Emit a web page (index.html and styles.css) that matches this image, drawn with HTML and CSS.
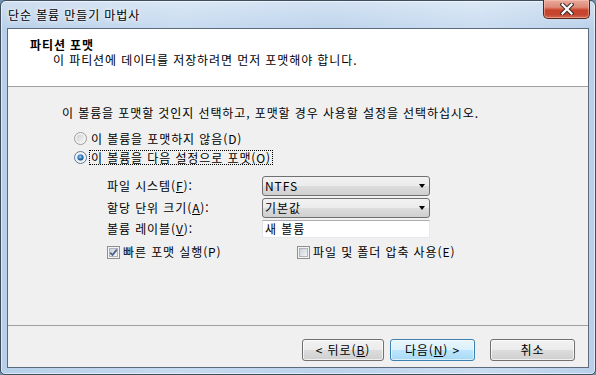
FILE: index.html
```html
<!DOCTYPE html>
<html lang="ko">
<head>
<meta charset="utf-8">
<title>단순 볼륨 만들기 마법사</title>
<link rel="stylesheet" href="styles.css">
</head>
<body>
<div class="window">
  <div class="titlebar">
    <span class="title">단순 볼륨 만들기 마법사</span>
    <div class="close">
      <svg width="14" height="12" viewBox="0 0 14 12">
        <path d="M2.5 1.5 L11.5 10.5 M11.5 1.5 L2.5 10.5" stroke="#3a2a28" stroke-width="4.2" stroke-linecap="square" fill="none"/>
        <path d="M2.5 1.5 L11.5 10.5 M11.5 1.5 L2.5 10.5" stroke="#ffffff" stroke-width="2.2" stroke-linecap="square" fill="none"/>
      </svg>
    </div>
  </div>
  <div class="client">
    <div class="header">
      <div class="h-title">파티션 포맷</div>
      <div class="h-sub">이 파티션에 데이터를 저장하려면 먼저 포맷해야 합니다.</div>
    </div>
    <div class="content">
      <div class="intro">이 볼륨을 포맷할 것인지 선택하고, 포맷할 경우 사용할 설정을 선택하십시오.</div>
      <div class="radios">
        <div class="radio">
          <svg class="rbox" width="13" height="13" viewBox="0 0 13 13">
            <defs>
              <linearGradient id="rg1" x1="0" y1="0" x2="1" y2="1">
                <stop offset="0" stop-color="#d0d0d0"/>
                <stop offset="1" stop-color="#f7f7f7"/>
              </linearGradient>
            </defs>
            <circle cx="6.5" cy="6.5" r="6" fill="#f4f4f4" stroke="#9a9a9a"/>
            <circle cx="6.5" cy="6.5" r="4" fill="url(#rg1)"/>
          </svg>
          <span class="rtext">이 볼륨을 포맷하지 않음(D)</span>
        </div>
        <div class="radio">
          <svg class="rbox" width="13" height="13" viewBox="0 0 13 13">
            <defs>
              <radialGradient id="rg2" cx="0.45" cy="0.4" r="0.6">
                <stop offset="0" stop-color="#9fd6f7"/>
                <stop offset="0.55" stop-color="#2f7fc2"/>
                <stop offset="1" stop-color="#17406f"/>
              </radialGradient>
            </defs>
            <circle cx="6.5" cy="6.5" r="6" fill="#f4f4f4" stroke="#5e7a99"/>
            <circle cx="6.5" cy="6.5" r="4" fill="#dfe6ee"/>
            <circle cx="6.5" cy="6.5" r="3" fill="url(#rg2)"/>
          </svg>
          <span class="rtext focus">이 볼륨을 다음 설정으로 포맷(O)</span>
        </div>
      </div>
      <div class="form">
        <span class="label">파일 시스템(<u>F</u>):</span>
        <div class="combo"><span>NTFS</span><i class="arrow"></i></div>
        <span class="label">할당 단위 크기(<u>A</u>):</span>
        <div class="combo"><span>기본값</span><i class="arrow"></i></div>
        <span class="label">볼륨 레이블(<u>V</u>):</span>
        <div class="textbox">새 볼륨</div>
      </div>
      <div class="checks">
        <div class="check first">
          <svg width="13" height="13" viewBox="0 0 13 13">
            <defs>
              <linearGradient id="cg1" x1="0" y1="0" x2="1" y2="1">
                <stop offset="0" stop-color="#cbcfd5"/>
                <stop offset="1" stop-color="#f4f6f8"/>
              </linearGradient>
            </defs>
            <rect x="0.5" y="0.5" width="12" height="12" fill="#f4f4f4" stroke="#8e8f8f"/>
            <rect x="2.5" y="2.5" width="8" height="8" fill="url(#cg1)" stroke="#aeb4bb"/>
            <path d="M3.3 6.6 L5.5 9 L9.8 3.6" stroke="#4a5f8a" stroke-width="1.7" fill="none"/>
          </svg>
          <span>빠른 포맷 실행(P)</span>
        </div>
        <div class="check">
          <svg width="13" height="13" viewBox="0 0 13 13">
            <defs>
              <linearGradient id="cg2" x1="0" y1="0" x2="1" y2="1">
                <stop offset="0" stop-color="#cbcfd5"/>
                <stop offset="1" stop-color="#f4f6f8"/>
              </linearGradient>
            </defs>
            <rect x="0.5" y="0.5" width="12" height="12" fill="#f4f4f4" stroke="#8e8f8f"/>
            <rect x="2.5" y="2.5" width="8" height="8" fill="url(#cg2)" stroke="#aeb4bb"/>
          </svg>
          <span>파일 및 폴더 압축 사용(E)</span>
        </div>
      </div>
    </div>
    <div class="footer">
      <button class="btn back">&lt; 뒤로(<u>B</u>)</button>
      <button class="btn next default">다음(<u>N</u>) &gt;</button>
      <button class="btn cancel">취소</button>
    </div>
  </div>
</div>
</body>
</html>
```

FILE: styles.css
```css
html, body {
  margin: 0;
  padding: 0;
}
body {
  width: 596px;
  height: 375px;
  overflow: hidden;
  font-family: "Noto Sans CJK KR", "Noto Sans", sans-serif;
  font-size: 12px;
  letter-spacing: 0.9px;
  color: #000;
  background: #6f8fb0;
}
.window {
  box-sizing: border-box;
  width: 596px;
  height: 375px;
  border: 1px solid #3f4d5c;
  border-radius: 6px 6px 5px 5px;
  padding: 0 6px 6px 6px;
  display: flex;
  flex-direction: column;
  background:
    linear-gradient(to bottom, rgba(255,255,255,0.35), rgba(255,255,255,0) 30px),
    linear-gradient(to right, #b7cfe9 0%, #c6daf0 30%, #bcd3ec 55%, #c9dcf1 80%, #b9d0ea 100%);
  box-shadow: inset 0 0 0 1px rgba(255,255,255,0.55);
}
.titlebar {
  height: 27px;
  margin: 0 -6px;
  display: flex;
  align-items: flex-start;
}
.title {
  padding: 7px 0 0 7px;
  line-height: 14px;
  text-shadow: 0 0 6px rgba(255,255,255,0.95), 0 0 3px rgba(255,255,255,0.9);
}
.close {
  margin-left: auto;
  margin-right: 5px;
  margin-top: -1px;
  width: 47px;
  height: 19px;
  box-sizing: border-box;
  border: 1px solid #5b2218;
  border-top: none;
  border-radius: 0 0 5px 5px;
  background: linear-gradient(to bottom, #e9a99b 0%, #de8a78 40%, #c9452d 55%, #c4452f 80%, #d36a4e 100%);
  box-shadow: inset 0 0 0 1px rgba(255,210,200,0.45);
  display: flex;
  align-items: center;
  justify-content: center;
}
.close svg {
  display: block;
}
.client {
  flex: 1;
  display: flex;
  flex-direction: column;
  border: 1px solid #5c6b7c;
  background: #f0f0f0;
  min-height: 0;
}
.header {
  height: 58px;
  box-sizing: border-box;
  background: #ffffff;
  border-bottom: 1px solid #a0a0a0;
  padding: 8px 0 0 22px;
  flex: none;
}
.h-title {
  font-weight: bold;
  line-height: 15px;
}
.h-sub {
  line-height: 15px;
  padding-left: 23px;
}
.content {
  flex: 1;
  padding: 18px 0 0 54px;
}
.intro {
  line-height: 16px;
}
.radios {
  margin: 8px 0 0 12px;
  display: flex;
  flex-direction: column;
  gap: 1px;
}
.radio {
  height: 18px;
  display: flex;
  align-items: center;
  gap: 2px;
}
.rbox {
  display: block;
  flex: none;
}
.rtext {
  line-height: 13px;
  padding: 0 1px;
  border: 1px solid transparent;
}
.rtext.focus {
  border: 1px dotted #000;
}
.form {
  margin: 10px 0 0 45px;
  display: grid;
  grid-template-columns: 155px 168px;
  grid-template-rows: 20px 20px 18px;
  row-gap: 2px;
  align-items: center;
}
.label {
  line-height: 14px;
}
.combo {
  height: 20px;
  box-sizing: border-box;
  border: 1px solid #707070;
  border-radius: 3px;
  background: linear-gradient(to bottom, #f2f2f2 0%, #ebebeb 50%, #dddddd 50%, #cfcfcf 100%);
  display: flex;
  align-items: center;
  padding: 0 4px 0 2px;
  line-height: 14px;
}
.arrow {
  margin-left: auto;
  width: 0;
  height: 0;
  border-left: 3.5px solid transparent;
  border-right: 3.5px solid transparent;
  border-top: 4px solid #000;
}
.textbox {
  height: 18px;
  box-sizing: border-box;
  background: #ffffff;
  border: 1px solid;
  border-color: #abadb3 #e3e9ef #e3e9ef #e2e3ea;
  padding: 0 2px;
  line-height: 16px;
}
.checks {
  margin: 7px 0 0 45px;
  display: flex;
  height: 14px;
  align-items: center;
}
.check {
  display: flex;
  align-items: center;
  gap: 3px;
  line-height: 14px;
}
.check svg {
  display: block;
  flex: none;
}
.check.first {
  width: 190px;
}
.footer {
  height: 42px;
  box-sizing: border-box;
  border-top: 1px solid #a0a0a0;
  flex: none;
  display: flex;
  justify-content: flex-end;
  padding: 13px 13px 0 0;
}
.btn {
  height: 22px;
  box-sizing: border-box;
  border: 1px solid #707070;
  border-radius: 3px;
  background: linear-gradient(to bottom, #f2f2f2 0%, #ebebeb 50%, #dddddd 50%, #cfcfcf 100%);
  box-shadow: inset 0 0 0 1px rgba(255,255,255,0.7);
  font-family: "Noto Sans CJK KR", "Noto Sans", sans-serif;
  font-size: 12px;
  letter-spacing: 0.9px;
  color: #000;
  padding: 0;
  line-height: 14px;
}
.back {
  width: 82px;
}
.next {
  width: 85px;
  margin-left: 6px;
}
.cancel {
  width: 85px;
  margin-left: 15px;
}
.btn.default {
  border-color: #3c7fb1;
  background: linear-gradient(to bottom, #eaf6fd 0%, #d9f0fc 50%, #bee6fd 50%, #a7d9f5 100%);
  box-shadow: inset 0 0 0 1px rgba(255,255,255,0.6);
}
```
